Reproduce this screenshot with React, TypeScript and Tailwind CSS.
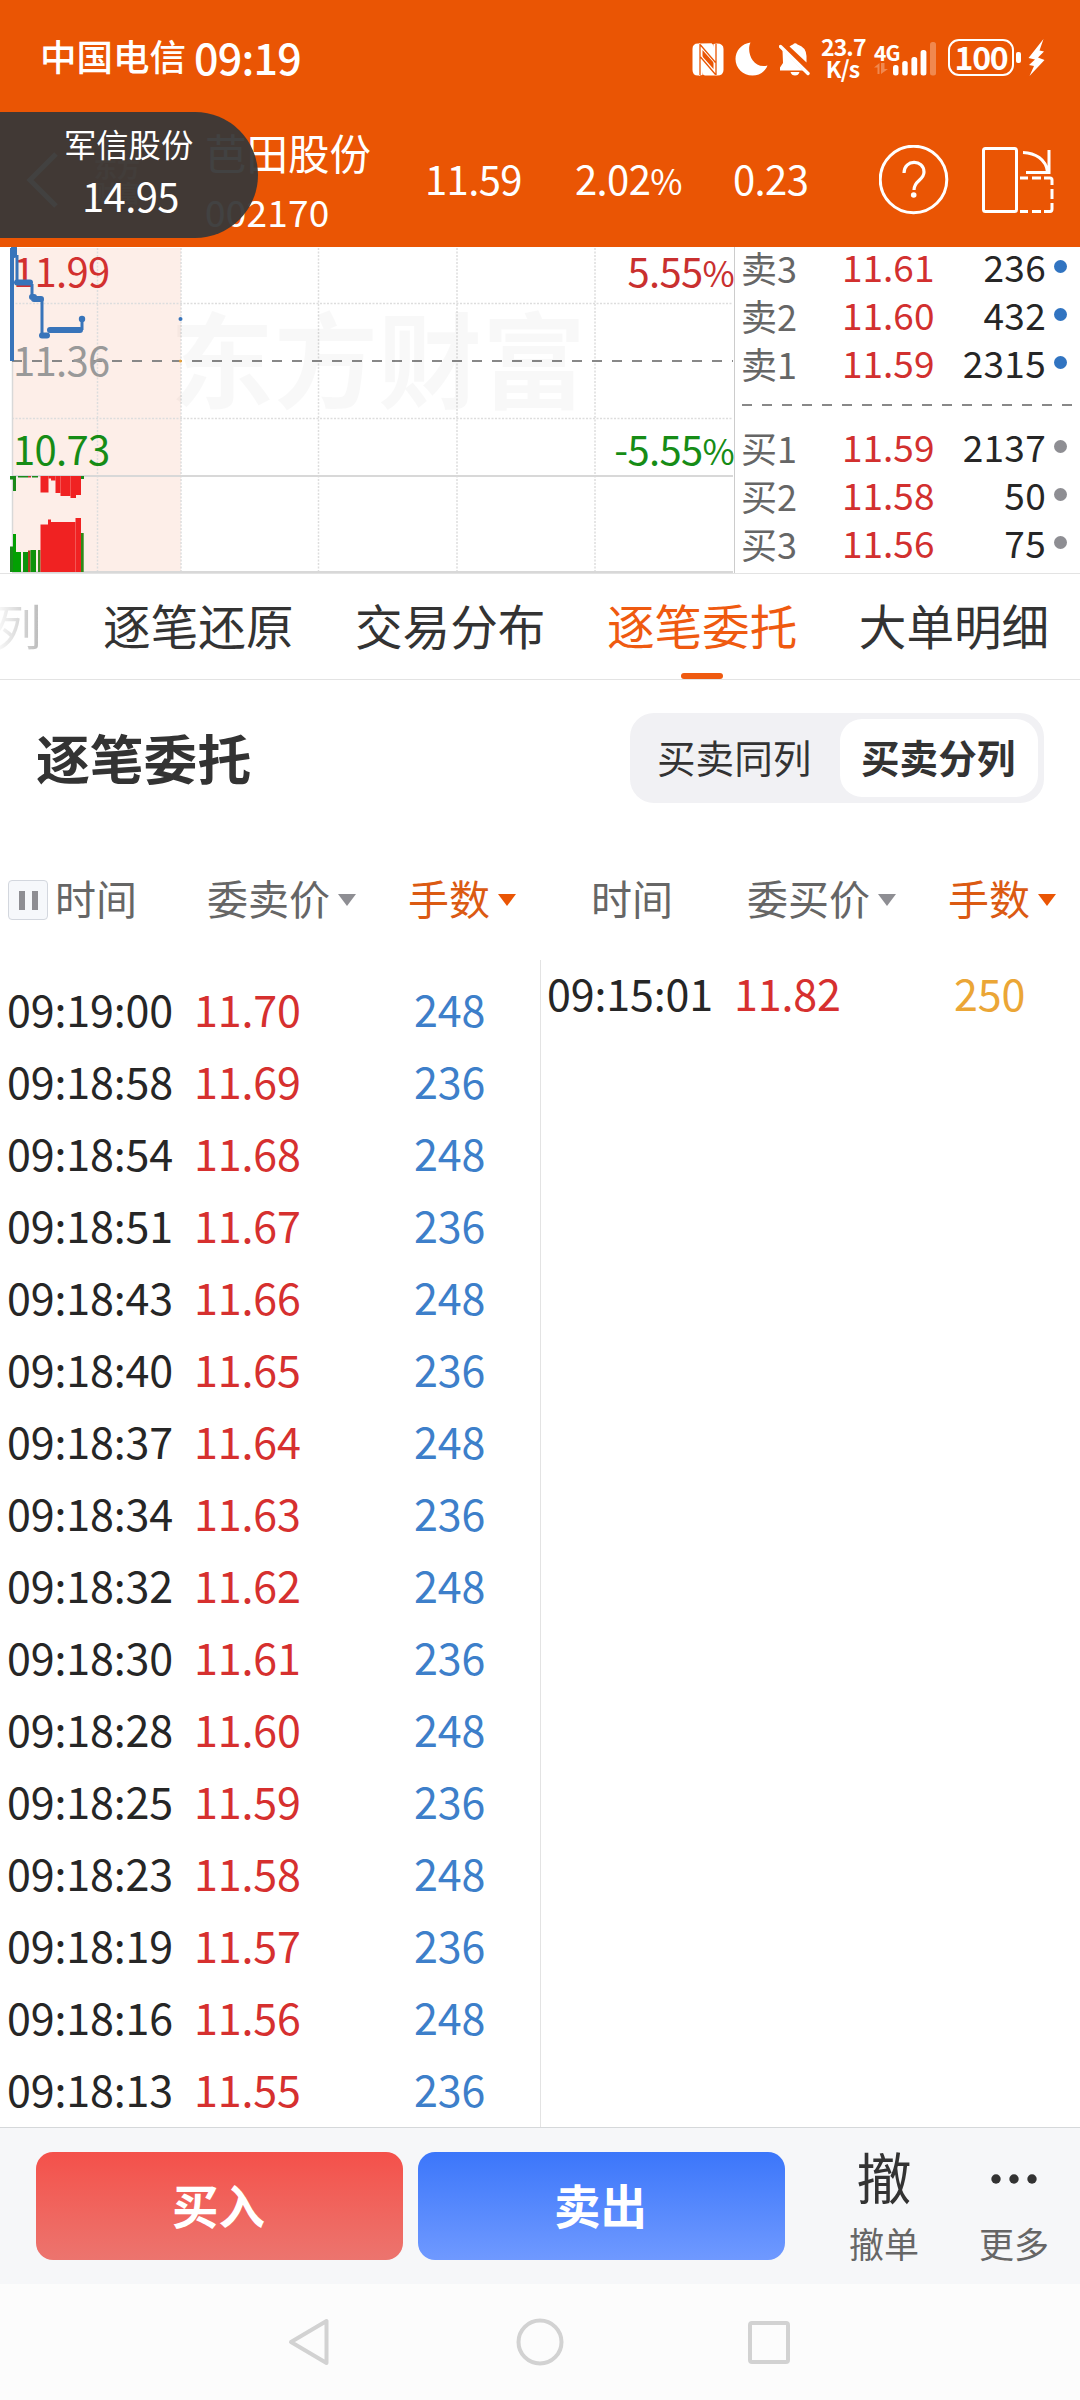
import React from 'react';

type Order = { time: string; price: string; lots: string };

const sellOrders: Order[] = [
  { time: '09:19:00', price: '11.70', lots: '248' },
  { time: '09:18:58', price: '11.69', lots: '236' },
  { time: '09:18:54', price: '11.68', lots: '248' },
  { time: '09:18:51', price: '11.67', lots: '236' },
  { time: '09:18:43', price: '11.66', lots: '248' },
  { time: '09:18:40', price: '11.65', lots: '236' },
  { time: '09:18:37', price: '11.64', lots: '248' },
  { time: '09:18:34', price: '11.63', lots: '236' },
  { time: '09:18:32', price: '11.62', lots: '248' },
  { time: '09:18:30', price: '11.61', lots: '236' },
  { time: '09:18:28', price: '11.60', lots: '248' },
  { time: '09:18:25', price: '11.59', lots: '236' },
  { time: '09:18:23', price: '11.58', lots: '248' },
  { time: '09:18:19', price: '11.57', lots: '236' },
  { time: '09:18:16', price: '11.56', lots: '248' },
  { time: '09:18:13', price: '11.55', lots: '236' },
];

const asks = [
  { label: '卖3', price: '11.61', qty: '236' },
  { label: '卖2', price: '11.60', qty: '432' },
  { label: '卖1', price: '11.59', qty: '2315' },
];

const bids = [
  { label: '买1', price: '11.59', qty: '2137' },
  { label: '买2', price: '11.58', qty: '50' },
  { label: '买3', price: '11.56', qty: '75' },
];

// Volume bars: x, width, top, height, color
const volumeBars: [number, number, number, number, string][] = [
  [10, 5, 476, 3.5, '#1a8a1a'],
  [13, 3, 476, 15, '#1a8a1a'],
  [18, 10, 476, 1.5, '#1a8a1a'],
  [28, 3, 476, 1.5, '#c0392b'],
  [32, 6, 476, 1.5, '#1a8a1a'],
  [40.5, 8, 476, 16.5, '#f02222'],
  [48.5, 2.5, 476, 2.5, '#f02222'],
  [51, 4.5, 476, 4.5, '#f02222'],
  [55.5, 5, 476, 17, '#f02222'],
  [60.5, 10, 476, 20, '#f02222'],
  [70.5, 5.5, 476, 22, '#f02222'],
  [76, 5, 476, 19, '#f02222'],
  [81, 3, 476, 3, '#1a8a1a'],
  [10, 3, 546.5, 25.5, '#1a8a1a'],
  [13, 3, 534, 38, '#03a003'],
  [16, 5, 552, 20, '#03a003'],
  [23, 5, 552, 20, '#0c930c'],
  [28, 2.5, 550.5, 21.5, '#b03a1e'],
  [30.5, 5.5, 550, 22, '#0c930c'],
  [38, 2.5, 550, 22, '#2f8a1a'],
  [40.5, 7.5, 524.5, 47.5, '#f02222'],
  [48, 3, 519.5, 52.5, '#f02222'],
  [51, 24.5, 522, 50, '#f02222'],
  [75.5, 5.5, 518, 54, '#f02222'],
  [81, 2.7, 533, 39, '#2f8a1a'],
];

function StatusBar() {
  return (
    <div className="flex h-28 justify-between pl-[40px] pr-[35px] text-white">
      <div className="flex h-[113px] items-center">
        <span className="w-[154px] text-[36.5px] leading-none font-medium">中国电信</span>
        <span className="text-[43px] leading-none font-medium tracking-[-0.8px]">09:19</span>
      </div>
      <div className="flex h-[118px] items-center">
        {/* NFC */}
        <svg width="32" height="33" viewBox="0 0 32 33" className="mr-[11px]">
          <path d="M6 0.5H20V1L8 0.5V32.5H6Q0.5 32.5 0.5 27V6Q0.5 0.5 6 0.5Z" fill="#fff" />
          <path d="M7 0.5H19Q22 1 22 5V20L10.5 7V32L7 32.5Z" fill="#fff" />
          <path d="M25 32.5H13Q10 32 10 28V13L21.500 26V1L25 0.5Q31.500 0.5 31.500 6V27Q31.500 32.500 25 32.500Z" fill="#fff" />
          <path d="M8 1V32M24 1V32M8.500 2L23.500 19.500M8.500 14L23.500 31.500" stroke="#ea5504" strokeWidth="1.3" fill="none" />
        </svg>
        {/* Do not disturb */}
        <svg width="33" height="34" viewBox="0 0 33 34" className="mr-[11px]">
          <path d="M15.500 0.500C11 10 18 27.500 32.500 23.500C30 30 24 33.500 17.500 33.500C8 33.500 0.500 26 0.500 17C0.500 8.500 7 1.500 15.500 0.500Z" fill="#fff" />
        </svg>
        {/* Muted bell */}
        <svg width="31" height="34" viewBox="0 0 31 34" className="mr-[11px]">
          <path d="M3.500 8L24 28.500H1V25.500L4 21Z" fill="#fff" />
          <path d="M10.500 4.500Q12.500 3 14 2.500Q16 0 18.500 2.500Q27 5 27.500 14V20.500Z" fill="#fff" />
          <path d="M1.500 4.500L29 31.500" stroke="#fff" strokeWidth="3.4" strokeLinecap="round" />
          <path d="M11.500 30H20.500Q19.500 33.500 16 33.500Q12.500 33.500 11.500 30Z" fill="#fff" />
        </svg>
        <div className="mr-[10px] w-[43px] pb-[3px] text-center text-[23px] leading-[21.500px] font-bold tracking-[-0.9px]">
          <div>23.7</div>
          <div>K/s</div>
        </div>
        <div className="mr-[11px] flex w-[63px] items-end">
          <div className="w-[19px]">
            <div className="text-[21px] leading-[20px] font-bold tracking-[-1px]">4G</div>
            <svg width="15" height="15" viewBox="0 0 15 15">
              <path d="M0 5.500L5.500 1V12H3.500V5.500ZM7 1V12L14 7H10.500V1Z" fill="#fff" opacity="0.3" />
            </svg>
          </div>
          <svg width="44" height="36" viewBox="0 0 44 36">
            <rect x="0" y="24" width="5.500" height="10.500" rx="2.500" fill="#fff" />
            <rect x="9.200" y="20" width="5.500" height="14.500" rx="2.500" fill="#fff" />
            <rect x="18.400" y="16" width="5.800" height="18.500" rx="2.500" fill="#fff" />
            <rect x="27.600" y="9" width="5.800" height="25.500" rx="2.500" fill="#fff" />
            <rect x="37" y="1" width="6" height="33.500" rx="2.500" fill="#fff" opacity="0.3" />
          </svg>
        </div>
        <div className="mb-[3px] flex h-[37px] w-[66px] items-center justify-center rounded-[11px] border-[2.500px] border-white pb-[4px] text-[32px] leading-none font-bold tracking-[-1.200px]">
          100
        </div>
        <div className="mr-[7px] mb-[3px] ml-[2px] h-[11px] w-[5px] rounded-[2px] bg-white" />
        <svg width="17" height="37" viewBox="0 0 17 37" className="mb-[3px]">
          <path d="M15.500 0L0.500 19L7 20.500L1 26L6 27L1.500 37L16.500 21L10 18.500L16 12.500L11.500 11.500Z" fill="#fff" />
        </svg>
      </div>
    </div>
  );
}

function Header() {
  return (
    <div className="flex h-[135px] items-center text-white">
      <svg width="94" height="62" viewBox="0 0 94 62" fill="none" opacity="0.8">
        <path d="M56 5L30 31L56 57" stroke="#fff" strokeWidth="5" />
      </svg>
      <div className="w-[111px] text-[23px] leading-[25px] font-bold text-white/40">
        <div>东方</div>
        <div>财富</div>
      </div>
      <div className="w-[220px] pt-[5px]">
        <div className="text-[41.500px] leading-[59px]">芭田股份</div>
        <div className="text-[37px] leading-[59px] tracking-[0.2px]">002170</div>
      </div>
      <div className="flex w-[454px] pb-[3px] text-[40px] leading-none tracking-[-0.6px]">
        <span className="w-[150px]">11.59</span>
        <span className="w-[158px]">
          2.02<span className="text-[35px]">%</span>
        </span>
        <span>0.23</span>
      </div>
      <svg width="70" height="70" viewBox="0 0 70 70" fill="none" stroke="#fff">
        <circle cx="34.500" cy="34.500" r="33.300" strokeWidth="3" />
        <path d="M25 28C25 14 45 14 45 27C45 35.500 35 35 35 45" strokeWidth="3.200" />
        <circle cx="34.700" cy="50" r="2.800" fill="#fff" stroke="none" />
      </svg>
      <svg width="74" height="68" viewBox="0 0 74 68" fill="none" stroke="#fff" strokeWidth="3" className="ml-8">
        <rect x="2.500" y="2.500" width="33" height="63" rx="2" />
        <path d="M42 6.500C54 7 65 13 66.500 26M68 4V26.500H45" />
        <path d="M39 32H47M51 32H60M63 32H69Q71 32 71 34V39M71 43V53M71 57V63Q71 65.500 69 65.500H63M60 65.500H51M47 65.500H39" />
      </svg>
    </div>
  );
}

function Chart() {
  return (
    <div className="relative h-[326px] w-[735px] border-r border-[#cccccc]">
      <svg width="734" height="326" viewBox="0 247 734 326" className="absolute inset-0">
        <rect x="12" y="248" width="169" height="324" fill="#fdeee8" />
        <g stroke="#dddddd" strokeWidth="1.500" strokeDasharray="2 1.500">
          <path d="M97.500 248V572M181 248V572M318.500 248V572M457 248V572M595 248V572" />
          <path d="M12 303.500H733M12 418.500H733" />
        </g>
        <path d="M12.500 361V572" stroke="#d8d8d8" strokeWidth="1.500" />
        <path d="M12 476H733M12 572H733" stroke="#d8d8d8" strokeWidth="2" />
        <path d="M12 361H733" stroke="#888888" strokeWidth="2" strokeDasharray="10 10" />
        {volumeBars.map(([x, w, y, h, fill], i) => (
          <rect key={i} x={x} y={y} width={w} height={h} fill={fill} />
        ))}
      </svg>
      {/* Watermark */}
      <div className="absolute top-[39px] left-[170px] text-[104px] leading-[140px] font-bold whitespace-nowrap text-black/[0.028]">
        东方财富
      </div>
      <div className="absolute inset-0 flex flex-col pt-[1px] pl-[13px] text-[40px] leading-[44px] tracking-[-0.7px]">
        <div className="flex h-[89px] justify-between">
          <span className="text-[#d2302f]">11.99</span>
          <span className="text-[#c9302f]">
            5.55<span className="text-[35px]">%</span>
          </span>
        </div>
        <div className="h-[89px] text-[#999999]">11.36</div>
        <div className="flex justify-between text-[#168c16]">
          <span>10.73</span>
          <span>
            -5.55<span className="text-[35px]">%</span>
          </span>
        </div>
      </div>
      <svg width="734" height="326" viewBox="0 247 734 326" className="absolute inset-0" fill="none" stroke="#3874ba">
        <path d="M12 361V248" strokeWidth="4" />
        <path d="M14 248V255" strokeWidth="6" strokeLinecap="round" />
        <path d="M17 255V282M32 284V297M42 299V335M82 330V319" strokeWidth="3" />
        <path d="M17 282.500H30M32 297H34M34 299H41M42 335.500H47M50 330H80" strokeWidth="6" strokeLinecap="round" />
        <circle cx="82" cy="319" r="3.200" fill="#3874ba" stroke="none" />
        <circle cx="180.500" cy="319" r="2" fill="#3874ba" stroke="none" />
        <circle cx="180.500" cy="361" r="1.500" fill="#e8a33c" stroke="none" />
      </svg>
    </div>
  );
}

function BookRow({ label, price, qty, dot }: { label: string; price: string; qty: string; dot: string }) {
  return (
    <div className="flex h-12 items-center text-[37px] leading-none">
      <span className="w-[101px] pb-px text-[36px] text-[#666666]">{label}</span>
      <span className="w-[92px] pb-px text-[#d2302f]">{price}</span>
      <span className="w-[112px] pb-px text-right tracking-[0.3px] text-[#262626]">{qty}</span>
      <span className={`mb-0.5 ml-[8px] h-[13px] w-[13px] rounded-full ${dot}`} />
    </div>
  );
}

function OrderBook() {
  return (
    <div className="flex-1 pl-[6px]">
      <div className="-mt-[4px]">
        {asks.map((a) => (
          <BookRow key={a.label} {...a} dot="bg-[#3174c1]" />
        ))}
      </div>
      <svg width="336" height="36" viewBox="0 0 336 36">
        <path d="M1 18H335" stroke="#888888" strokeWidth="2" strokeDasharray="10 10" />
      </svg>
      <div>
        {bids.map((b) => (
          <BookRow key={b.label} {...b} dot="bg-[#8e8e93]" />
        ))}
      </div>
    </div>
  );
}

function Tabs() {
  return (
    <div className="flex h-[107px] gap-[61.500px] overflow-hidden border-t border-b border-[#e3e3e3] text-[47.600px] leading-[101px] whitespace-nowrap text-[#333333]">
      <span className="-ml-[6px] bg-linear-to-r from-white to-[#b8b8b8] bg-clip-text text-transparent">列</span>
      <span>逐笔还原</span>
      <span>交易分布</span>
      <div className="flex flex-col items-center text-[#ef5a10]">
        <span className="h-[99px]">逐笔委托</span>
        <span className="h-[6px] w-[42px] shrink-0 rounded-full bg-[#ef5a10]" />
      </div>
      <span>大单明细</span>
    </div>
  );
}

function Triangle({ color }: { color: string }) {
  return (
    <svg width="18" height="12" viewBox="0 0 18 12" className="ml-[8px]">
      <path d="M0 0H18L9 12Z" fill={color} />
    </svg>
  );
}

function ColumnHead({ priceLabel, pausable }: { priceLabel: string; pausable?: boolean }) {
  return (
    <div className="flex h-10 w-[540px] items-center text-[41px] leading-none text-[#666666]">
      <div className="flex w-[207px] items-center">
        {pausable ? (
          <div className="mr-[7px] ml-2 flex h-10 w-10 items-center justify-center gap-[7px] rounded-[4px] border border-[#d3d7de] bg-[#f6f8fb]">
            <span className="h-[19px] w-[6px] bg-[#8e8e93]" />
            <span className="h-[19px] w-[6px] bg-[#8e8e93]" />
          </div>
        ) : (
          <div className="w-[51px]" />
        )}
        <span className="pb-[5px]">时间</span>
      </div>
      <div className="flex w-[201px] items-center">
        <span className="pb-[5px]">{priceLabel}</span>
        <Triangle color="#8e8e93" />
      </div>
      <div className="flex items-center text-[#db5a12]">
        <span className="pb-[5px]">手数</span>
        <Triangle color="#ea5504" />
      </div>
    </div>
  );
}

function OrderRow({ order, lotsColor, height }: { order: Order; lotsColor: string; height: string }) {
  return (
    <div className={`flex items-center text-[43px] leading-none tracking-[-0.15px] ${height}`}>
      <span className="w-[187px] text-[#262626]">{order.time}</span>
      <span className="w-[220px] text-[#d6302f]">{order.price}</span>
      <span className={lotsColor}>{order.lots}</span>
    </div>
  );
}

export default function App() {
  return (
    <div className="relative flex h-[2400px] w-[1080px] flex-col overflow-hidden bg-white font-['Noto_Sans_CJK_SC',sans-serif]">
      <div className="h-[247px] bg-[#ea5504]">
        <StatusBar />
        <Header />
      </div>

      {/* Floating quote of the previous stock */}
      <div className="absolute top-28 left-0 flex h-[126px] w-[258px] flex-col rounded-r-full bg-[#383838]/95 text-white">
        <div className="pt-[5px] pl-[64px] text-[32.300px] leading-[52px]">军信股份</div>
        <div className="pl-[82px] text-[40px] leading-[53px] tracking-[-0.6px]">14.95</div>
      </div>

      <div className="flex h-[326px]">
        <Chart />
        <OrderBook />
      </div>

      <Tabs />

      <div className="flex h-[200px] items-start justify-between pt-[33px] pr-9 pl-9">
        <h1 className="pt-px text-[53.800px] leading-[86px] font-bold text-[#333333]">逐笔委托</h1>
        <div className="flex h-[90px] w-[414px] rounded-[24px] bg-[#f1f1f4] p-1.5 text-[38.600px] leading-[74px] text-[#333333]">
          <div className="w-[204px] pl-[21px]">买卖同列</div>
          <div className="flex-1 rounded-[22px] bg-white pl-[21px] font-bold">买卖分列</div>
        </div>
      </div>

      <div className="flex h-20">
        <ColumnHead priceLabel="委卖价" pausable />
        <ColumnHead priceLabel="委买价" />
      </div>

      <div className="flex h-[1167px] overflow-hidden">
        <div className="w-[540px] pt-3 pl-[7px]">
          {sellOrders.map((o) => (
            <OrderRow key={o.time} order={o} lotsColor="text-[#3d7fca]" height="h-[72px]" />
          ))}
        </div>
        <div className="w-[540px] border-l border-[#e3e3e3] pl-[6px]">
          <OrderRow order={{ time: '09:15:01', price: '11.82', lots: '250' }} lotsColor="text-[#eba636]" height="h-16" />
        </div>
      </div>

      {/* Trade actions */}
      <div className="flex h-[157px] items-start border-t border-[#d5d8da] bg-[#f6f7f9] pt-6 pl-9">
        <button className="h-[108px] w-[367px] rounded-[17px] bg-linear-to-b from-[#f4504a] to-[#ec746e] pr-[2px] pb-[4px] text-[46.500px] leading-none font-bold text-white">
          买入
        </button>
        <button className="ml-[15px] h-[108px] w-[367px] rounded-[17px] bg-linear-to-b from-[#3b76fa] to-[#6f99ff] pr-[2px] pb-[4px] text-[46.500px] leading-none font-bold text-white">
          卖出
        </button>
        <div className="ml-[34px] flex w-[130px] flex-col items-center">
          <span className="text-[55px] leading-[46px] text-[#333333]">撤</span>
          <span className="pt-[22px] text-[35px] leading-[46px] text-[#666666]">撤单</span>
        </div>
        <div className="flex w-[130px] flex-col items-center">
          <svg width="48" height="46" viewBox="0 0 48 46" fill="#333333">
            <circle cx="6" cy="27" r="4.700" />
            <circle cx="24" cy="27" r="4.700" />
            <circle cx="42" cy="27" r="4.700" />
          </svg>
          <span className="pt-[22px] text-[35px] leading-[46px] text-[#666666]">更多</span>
        </div>
      </div>

      {/* System navigation */}
      <div className="flex flex-1 items-center justify-center gap-[184px] bg-[#fcfcfc]">
        <svg width="44" height="48" viewBox="0 0 44 48" fill="none" stroke="#d2d2d2" strokeWidth="4" strokeLinejoin="round">
          <path d="M3 24L38.500 3V45Z" />
        </svg>
        <svg width="48" height="48" viewBox="0 0 48 48" fill="none" stroke="#d2d2d2" strokeWidth="4">
          <circle cx="24" cy="24" r="21.500" />
        </svg>
        <svg width="44" height="48" viewBox="0 0 44 48" fill="none" stroke="#d2d2d2" strokeWidth="4">
          <rect x="2" y="5" width="38" height="39" rx="2" />
        </svg>
      </div>
    </div>
  );
}
